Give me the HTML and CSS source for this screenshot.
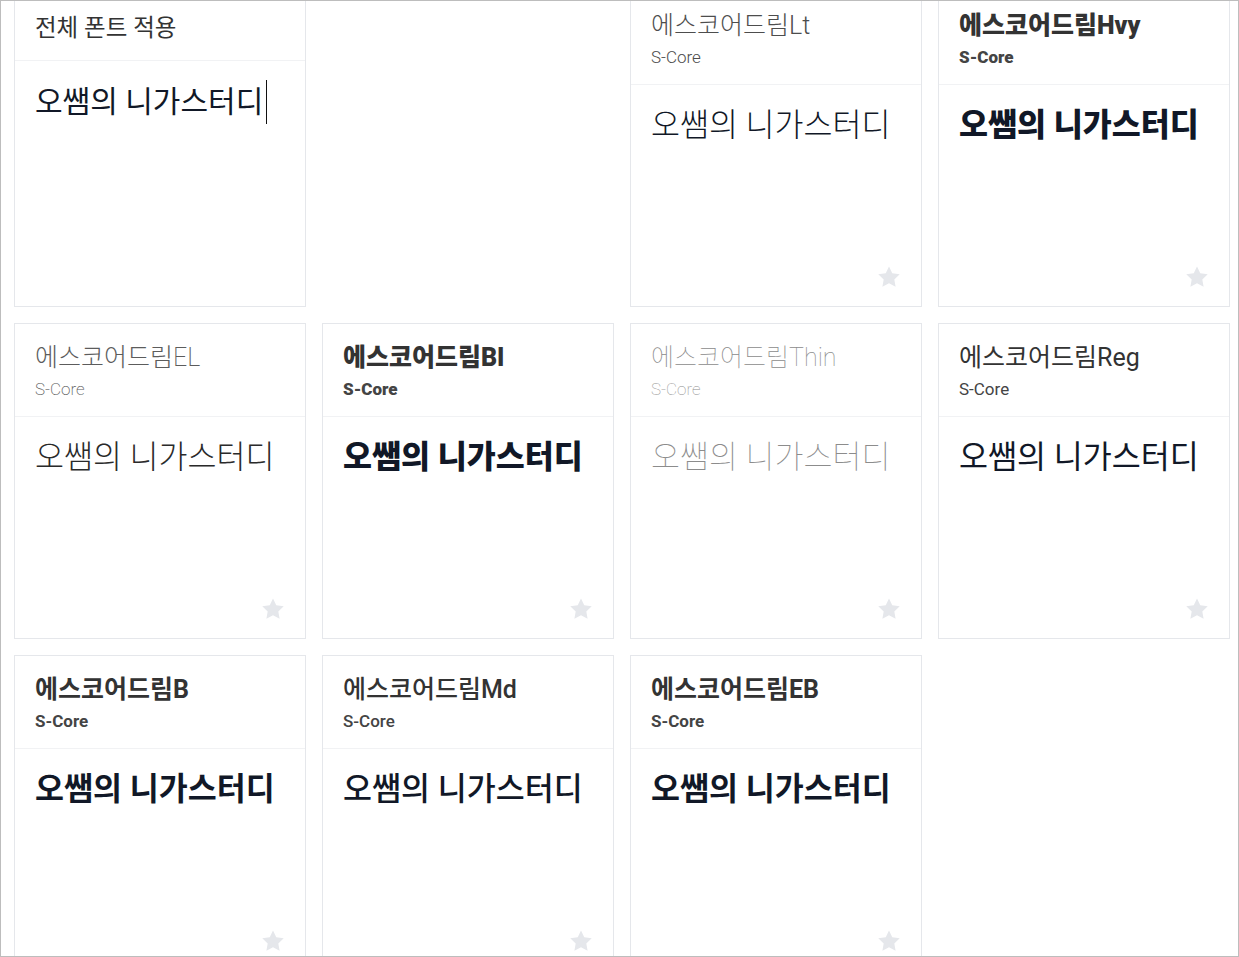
FILE: index.html
```html
<!DOCTYPE html>
<html lang="ko">
<head>
    <meta charset="UTF-8">
    <meta name="viewport" content="width=device-width, initial-scale=1.0">
    <title>폰트 미리보기</title>
    <link rel="stylesheet" href="styles.css">
</head>
<body>
    <div class="frame">
        <div class="font-grid">
            <div class="card">
                <div class="card-head">
                    <div class="apply-title">전체 폰트 적용</div>
                </div>
                <div class="apply-input">오쌤의 니가스터디<span class="caret"></span></div>
            </div>

            <div class="slot"></div>

            <div class="card w300">
                <div class="card-head">
                    <div class="font-name">에스코어드림Lt</div>
                    <div class="font-family">S-Core</div>
                </div>
                <div class="card-body">
                    <div class="sample">오쌤의 니가스터디</div>
                    <svg class="star" viewBox="0 0 24 24"><path d="M12 2.2l3 6.3 6.9.9-5 4.8 1.2 6.9L12 17.8l-6.1 3.3 1.2-6.9-5-4.8 6.9-.9z"/></svg>
                </div>
            </div>

            <div class="card w800">
                <div class="card-head">
                    <div class="font-name">에스코어드림Hvy</div>
                    <div class="font-family">S-Core</div>
                </div>
                <div class="card-body">
                    <div class="sample">오쌤의 니가스터디</div>
                    <svg class="star" viewBox="0 0 24 24"><path d="M12 2.2l3 6.3 6.9.9-5 4.8 1.2 6.9L12 17.8l-6.1 3.3 1.2-6.9-5-4.8 6.9-.9z"/></svg>
                </div>
            </div>

            <div class="card w200">
                <div class="card-head">
                    <div class="font-name">에스코어드림EL</div>
                    <div class="font-family">S-Core</div>
                </div>
                <div class="card-body">
                    <div class="sample">오쌤의 니가스터디</div>
                    <svg class="star" viewBox="0 0 24 24"><path d="M12 2.2l3 6.3 6.9.9-5 4.8 1.2 6.9L12 17.8l-6.1 3.3 1.2-6.9-5-4.8 6.9-.9z"/></svg>
                </div>
            </div>

            <div class="card w900">
                <div class="card-head">
                    <div class="font-name">에스코어드림Bl</div>
                    <div class="font-family">S-Core</div>
                </div>
                <div class="card-body">
                    <div class="sample">오쌤의 니가스터디</div>
                    <svg class="star" viewBox="0 0 24 24"><path d="M12 2.2l3 6.3 6.9.9-5 4.8 1.2 6.9L12 17.8l-6.1 3.3 1.2-6.9-5-4.8 6.9-.9z"/></svg>
                </div>
            </div>

            <div class="card w100">
                <div class="card-head">
                    <div class="font-name">에스코어드림Thin</div>
                    <div class="font-family">S-Core</div>
                </div>
                <div class="card-body">
                    <div class="sample">오쌤의 니가스터디</div>
                    <svg class="star" viewBox="0 0 24 24"><path d="M12 2.2l3 6.3 6.9.9-5 4.8 1.2 6.9L12 17.8l-6.1 3.3 1.2-6.9-5-4.8 6.9-.9z"/></svg>
                </div>
            </div>

            <div class="card w400">
                <div class="card-head">
                    <div class="font-name">에스코어드림Reg</div>
                    <div class="font-family">S-Core</div>
                </div>
                <div class="card-body">
                    <div class="sample">오쌤의 니가스터디</div>
                    <svg class="star" viewBox="0 0 24 24"><path d="M12 2.2l3 6.3 6.9.9-5 4.8 1.2 6.9L12 17.8l-6.1 3.3 1.2-6.9-5-4.8 6.9-.9z"/></svg>
                </div>
            </div>

            <div class="card w600">
                <div class="card-head">
                    <div class="font-name">에스코어드림B</div>
                    <div class="font-family">S-Core</div>
                </div>
                <div class="card-body">
                    <div class="sample">오쌤의 니가스터디</div>
                    <svg class="star" viewBox="0 0 24 24"><path d="M12 2.2l3 6.3 6.9.9-5 4.8 1.2 6.9L12 17.8l-6.1 3.3 1.2-6.9-5-4.8 6.9-.9z"/></svg>
                </div>
            </div>

            <div class="card w500">
                <div class="card-head">
                    <div class="font-name">에스코어드림Md</div>
                    <div class="font-family">S-Core</div>
                </div>
                <div class="card-body">
                    <div class="sample">오쌤의 니가스터디</div>
                    <svg class="star" viewBox="0 0 24 24"><path d="M12 2.2l3 6.3 6.9.9-5 4.8 1.2 6.9L12 17.8l-6.1 3.3 1.2-6.9-5-4.8 6.9-.9z"/></svg>
                </div>
            </div>

            <div class="card w700">
                <div class="card-head">
                    <div class="font-name">에스코어드림EB</div>
                    <div class="font-family">S-Core</div>
                </div>
                <div class="card-body">
                    <div class="sample">오쌤의 니가스터디</div>
                    <svg class="star" viewBox="0 0 24 24"><path d="M12 2.2l3 6.3 6.9.9-5 4.8 1.2 6.9L12 17.8l-6.1 3.3 1.2-6.9-5-4.8 6.9-.9z"/></svg>
                </div>
            </div>
        </div>
    </div>
</body>
</html>
```
FILE: styles.css
```css
html, body {
    margin: 0;
    height: 100%;
}

body {
    background-color: white;
    font-family: Roboto, "Noto Sans CJK KR", sans-serif;
    color: #111827;
}

.frame {
    box-sizing: border-box;
    height: 957px;
    border: 1px solid #bdbdbd;
    overflow: hidden;
}

.font-grid {
    display: grid;
    grid-template-columns: repeat(4, 292px);
    grid-auto-rows: 316px;
    gap: 16px;
    margin-top: -10px;
    padding-left: 13px;
}

.card {
    box-sizing: border-box;
    border: 1px solid #e5e7eb;
    background-color: white;
    display: flex;
    flex-direction: column;
}

.card-head {
    padding: 18px 20px 15px;
    border-bottom: 1px solid #f1f2f4;
}

.apply-title {
    padding: 2px 0 1px;
    font-size: 23.5px;
    line-height: 32px;
    color: #333;
}

.apply-input {
    padding: 19px 20px 0;
    font-size: 30px;
    line-height: 44px;
    color: #111827;
}

.caret {
    display: inline-block;
    width: 1px;
    height: 44px;
    margin-left: 3px;
    vertical-align: top;
    background-color: #111;
}

.font-name {
    font-size: 25px;
    line-height: 32px;
    color: #333;
}

.font-family {
    margin-top: 3px;
    font-size: 17px;
    line-height: 24px;
    color: #444;
}

.card-body {
    flex: 1;
    display: flex;
    flex-direction: column;
    padding: 21px 20px 16px;
}

.sample {
    font-size: 31.5px;
    line-height: 40px;
    color: #111827;
}

.star {
    width: 26px;
    height: 26px;
    margin-top: auto;
    align-self: flex-end;
    margin-right: -1px;
    fill: #e5e7eb;
}

/* weights */
.w100 { font-weight: 100; }
.w200 { font-weight: 200; }
.w300 { font-weight: 300; }
.w400 { font-weight: 400; }
.w500 { font-weight: 500; }
.w600 { font-weight: 700; }
.w700 { font-weight: 700; }
.w800 { font-weight: 900; }
.w900 { font-weight: 900; }

.w100 .font-name,
.w100 .font-family,
.w100 .sample {
    color: #8c8c8c;
}

.w200 .font-name,
.w200 .font-family {
    color: #5c5c5c;
}

.w200 .sample {
    color: #2a2a2a;
}

.w300 .font-name,
.w300 .font-family {
    color: #4d4d4d;
}
```
